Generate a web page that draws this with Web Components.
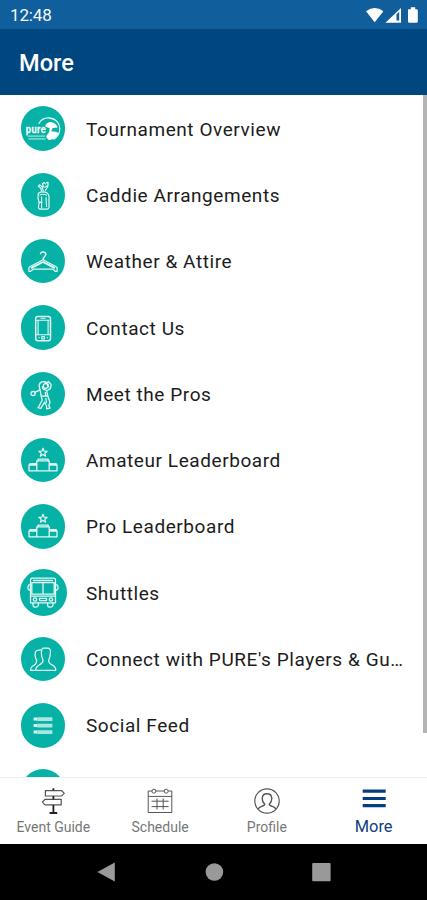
<!DOCTYPE html>
<html lang="en">
<head>
<meta charset="utf-8">
<meta name="viewport" content="width=device-width, initial-scale=1">
<title>More</title>
<style>
	html, body { margin: 0; height: 100%; overflow: hidden; }
	body { background: #fff; font-family: Roboto, "Noto Sans", sans-serif; }
</style>
</head>
<body>
<more-screen>
	<status-bar slot="top">12:48</status-bar>
	<title-bar slot="top">More</title-bar>

	<menu-item icon="pure">Tournament Overview</menu-item>
	<menu-item icon="bag">Caddie Arrangements</menu-item>
	<menu-item icon="hanger">Weather &amp; Attire</menu-item>
	<menu-item icon="phone">Contact Us</menu-item>
	<menu-item icon="golfer">Meet the Pros</menu-item>
	<menu-item icon="podium">Amateur Leaderboard</menu-item>
	<menu-item icon="podium">Pro Leaderboard</menu-item>
	<menu-item icon="bus" large>Shuttles</menu-item>
	<menu-item icon="people">Connect with PURE's Players &amp; Gu…</menu-item>
	<menu-item icon="feed">Social Feed</menu-item>
	<menu-item></menu-item>

	<tab-bar slot="bottom">
		<tab-item icon="signpost">Event Guide</tab-item>
		<tab-item icon="calendar">Schedule</tab-item>
		<tab-item icon="profile">Profile</tab-item>
		<tab-item icon="more" active>More</tab-item>
	</tab-bar>
	<system-nav slot="bottom"></system-nav>
</more-screen>

<script>
// Menu icons, drawn on a 44x44 box
const MENU_ICONS = {
	pure: `
		<text x="4.8" y="25.6" font-family="Roboto, sans-serif" font-size="11" font-weight="500" textLength="20.4" lengthAdjust="spacingAndGlyphs" fill="#fff" stroke="#fff" stroke-width=".3">pure</text>
		<path d="M17.8 16.8C19.8 12.8 24 10.6 28.5 11C34.5 11.5 38.8 16 38.8 21.5C38.8 26 36.5 30 32.5 32.4" stroke-width="1.3"/>
		<path d="M24.3 19.4C24.5 16.6 28 14.7 31 15.2C34 15.8 36 18 36.6 20.6L31.6 21.1L30.3 24.3C33 24.3 36 25 37.2 26C36 30 33 32.6 28 33C26 31.8 25.4 30.6 25.2 29L28.1 25.2L28.7 21.2Z" fill="#fff" stroke="none"/>
		<path d="M6.5 29.2H24M7.5 31.8H24.5" stroke-width="1.8" opacity=".5"/>`,
	bag: `
		<path d="M17.3 20.2Q22 17.6 26.6 20.2L28 23.2V34.4Q27.6 36.2 25.4 36.2H20Q17.6 36.2 17.4 34.2L18.1 29.5L17 25Z" stroke-width="1.2"/>
		<path d="M18.5 22Q22 20.4 26 22.3M25 24.2L25.6 34M18.2 29.4H21.4M20.6 23.4V35.4"/>
		<path d="M20.6 18.4L19.8 15L17.4 13.6L18.4 11.8L21 13.4L22.4 18.2M22.6 14.2L21.4 10.8L23 9.6L24.8 11.4M23.4 14.4L27 12.4V9.4L25 9.8M27 12.4L26.4 14.2L24.2 17.8" stroke-width="1.2"/>`,
	hanger: `
		<path d="M19.5 15.2C19.3 12.3 24.6 12 24.8 15.2C24.9 17.5 22.1 17.3 22.1 21.2" stroke-width="1.5"/>
		<path d="M22 20.8L8.8 27.8Q7.8 28.3 7.9 29.3V32.3H9.8L12 30.2H32L34.2 32.3H36.1V29.3Q36.2 28.3 35.2 27.8Z" stroke-width="1.2"/>
		<path d="M22 22.9L10 29.1M22 22.9L34 29.1" stroke-width="1.9"/>`,
	phone: `
		<rect x="14.7" y="10.6" width="14.8" height="24.2" rx="2.2" stroke-width="1.5"/>
		<path d="M15 14.2H29.2M15 28.8H29.2M17.1 14.2V28.8M27.1 14.2V28.8M19.6 12.3H24.4"/>
		<rect x="20.8" y="30.5" width="2.6" height="2.4"/>
		<path d="M17.3 31.7H18.7M25.5 31.7H26.9"/>`,
	golfer: `
		<g stroke-width="1.3">
			<circle cx="12.1" cy="21.6" r="2.1"/>
			<path d="M13.8 20.3L19 17.8L18.1 13.6Q18.4 10.6 21 9.8L24.3 9.6L25 11.2L27.4 9.4L30.2 12.6L29.4 16.6L25.7 18.7L22.2 17.2L21.2 14.2"/>
			<circle cx="24.6" cy="14" r="2.3"/>
			<path d="M26.6 11.2L28 15.7M19 17.8L20.3 24.5L21.2 28.2L18 34.3L17 35.7L19.8 36.4L23.7 30L25.6 34.2V36.8L29.1 36.2L27.8 33.6L29 30L27.4 25.8L26 20.3V18.4"/>
			<path d="M20.4 24.2L26.7 24M24.3 20.1L24.8 23.8M24.8 26L25.6 31"/>
		</g>`,
	podium: `
		<path d="M22 10.2L23.1 13.1L26.2 13.3L23.8 15.2L24.6 18.2L22 16.5L19.4 18.2L20.2 15.2L17.8 13.3L20.9 13.1Z" stroke-width="1.2"/>
		<path d="M15.8 32.8V22.8H17V21.2H27.2V22.8H28.2V32.8H15.8M15.8 27H9V25.6H15.8M9 27H8V32.8H15.8M28.2 25.6H35.2V27H36V32.8H28.2M28.2 27H35.2M17 22.8H27.2" stroke-width="1.3"/>`,
	bus: `
		<g stroke-width="1.3">
			<path d="M11.4 7.2H32.6Q34.5 7.2 34.5 9.3V31.9H9.5V9.3Q9.5 7.2 11.4 7.2Z"/>
			<path d="M12 9.5H32M10.8 11.6H33.2V23.2H10.8ZM22 11.6V23.2M9.5 25.2H34.5"/>
			<path d="M9.3 13.8H8Q6.9 14 7 17.8Q7.1 19 8.2 19H9.3M34.7 13.8H36Q37.1 14 37 17.8Q36.9 19 35.8 19H34.7"/>
			<circle cx="14" cy="28.5" r="1.7"/><circle cx="30" cy="28.5" r="1.7"/>
			<path d="M18.5 27.4H25.5V29.6H18.5ZM12 32V34.2Q12.2 36.2 14.8 36.2Q17.2 36 17.4 34.2V32M26.6 32V34.2Q26.8 36.2 29.2 36.2Q31.8 36 32 34.2V32"/>
		</g>`,
	people: `
		<g stroke-width="1.25">
			<path d="M20.8 12.7Q21 11.2 22.4 11.2H26.6Q29.6 11.4 29.5 14.7L28.9 19.8Q27.7 22 27.7 24.6Q28.3 26.6 31.4 28.1Q34.8 29.8 34.8 33.3H14.6Q14.8 30.1 17.8 28.2Q21.6 26.4 22 24.2Q21.8 21.8 20.8 19.8Q19.8 16.2 20.8 12.7Z"/>
			<path d="M20.1 12.9Q15.3 12.8 14.4 15.1Q13.8 17.6 14.4 20.4Q16 23 15.5 25.3Q14.7 27.8 12 28.8Q9.6 30.2 9.5 33.3H14.6"/>
		</g>`,
	feed: `
		<path d="M12.6 16.1H16.2M12.6 22.6H16.2M12.6 29.1H16.2" stroke-width="3" stroke-linecap="butt"/>
		<path d="M16.2 16.1H31.4M16.2 22.6H31.4M16.2 29.1H31.4" stroke-width="3.8" stroke-linecap="butt" opacity=".75"/>`
};

// Tab icons, drawn on a 28x28 box
const TAB_ICONS = {
	signpost: `
		<path d="M6.4 3.6H22.6L25.2 6.3L22.6 9H6.4ZM22.2 12.4H6L3.4 15.1L6 17.8H22.2Z" stroke-width="1.2"/>
		<path d="M14.4 1.2V3.4M14.4 9V12.2M14.4 18V25.6M10.6 26H18.2" stroke="#222" stroke-width="1.8"/>`,
	calendar: `
		<path d="M6.2 4H2.2V25.5H25.8V4H22.4M9.6 4H18.8M2.2 9.4H25.8"/>
		<circle cx="7.9" cy="4.2" r="2"/><circle cx="20.2" cy="4.2" r="2"/>
		<path d="M5.6 14.2H22.6M5.6 19.6H22.6M11 11.4V22.5M17.2 11.4V22.5"/>`,
	profile: `
		<circle cx="14" cy="14" r="12.2" stroke-width="1.2"/>
		<path d="M5 22.2Q6 20.3 8.7 19.3Q11.8 18.3 11.7 17.2Q9.1 14.5 9.2 11.4Q9.4 6.7 14 6.7Q18.6 6.7 18.8 11.4Q18.9 14.5 16.3 17.2Q16.2 18.3 19.3 19.3Q22 20.3 23 22.2" stroke-width="1.4"/>`,
	more: `<path d="M2.7 4.2H25.7M2.7 11.5H25.7M2.7 18.6H25.7" stroke-width="3.2"/>`
};

class MoreScreen extends HTMLElement {
	constructor() {
		super();
		this.attachShadow({ mode: 'open' });
		this.shadowRoot.innerHTML = `
			<style>
				:host {
					display: flex;
					flex-direction: column;
					width: 427px;
					height: 900px;
					overflow: hidden;
				}
				main {
					flex: 1;
					min-height: 0;
					box-sizing: border-box;
					padding-top: .5px;
					position: relative;
					overflow: hidden;
				}
				/* Scroll thumb, over the list */
				.thumb {
					position: absolute;
					top: 0;
					right: 0;
					width: 4px;
					height: 638px;
					background: #b4b4b5;
				}
			</style>
			<slot name="top"></slot>
			<main>
				<slot></slot>
				<div class="thumb"></div>
			</main>
			<slot name="bottom"></slot>
		`;
	}
}

class StatusBar extends HTMLElement {
	constructor() {
		super();
		this.attachShadow({ mode: 'open' });
		this.shadowRoot.innerHTML = `
			<style>
				:host {
					display: flex;
					flex: none;
					align-items: center;
					justify-content: space-between;
					box-sizing: border-box;
					height: 29px;
					padding: 1px 8px 0 10px;
					background: #105e9b;
					color: #f4f8fb;
					font-size: 17px;
					letter-spacing: -.15px;
				}
				svg { display: block; margin-top: -1px; }
			</style>
			<slot></slot>
			<svg width="54" height="18" viewBox="0 0 54 18" fill="#fff">
				<path d="M1 5.3Q9.7-1.5 18.4 5.3L9.7 16.3Z"/>
				<path d="M20.4 16.8L36 2V16.8Z"/>
				<path d="M31.5 8.3L34.2 5.7V14.6H31.5Z" fill="#105e9b"/>
				<path d="M43.2 3.2H45.8V1.2H50.2V3.2H51.4Q52.8 3.2 52.8 4.6V15.4Q52.8 16.8 51.4 16.8H44.4Q43 16.8 43 15.4V4.6Q43 3.4 43.2 3.2Z"/>
			</svg>
		`;
	}
}

class TitleBar extends HTMLElement {
	constructor() {
		super();
		this.attachShadow({ mode: 'open' });
		this.shadowRoot.innerHTML = `
			<style>
				:host {
					display: flex;
					flex: none;
					align-items: center;
					box-sizing: border-box;
					height: 66px;
					padding: 2px 19px 0;
					background: #01477f;
					color: #fff;
					font-size: 23.6px;
					font-weight: 500;
				}
			</style>
			<slot></slot>
		`;
	}
}

class MenuItem extends HTMLElement {
	constructor() {
		super();
		this.attachShadow({ mode: 'open' });
		const icon = MENU_ICONS[this.getAttribute('icon')] || '';
		this.shadowRoot.innerHTML = `
			<style>
				:host {
					display: grid;
					grid-template-columns: 46.4px 1fr;
					column-gap: 19.6px;
					align-items: center;
					height: 66.3px;
					padding-left: 20px;
					color: #1c1c1c;
					font-size: 19px;
					letter-spacing: .57px;
					white-space: nowrap;
				}
				.disc {
					justify-self: center;
					display: grid;
					place-items: center;
					width: 44.4px;
					height: 44.4px;
					border-radius: 50%;
					background: #06b2a5;
				}
				:host([large]) .disc { width: 47px; height: 47px; }
				svg {
					width: 44px;
					height: 44px;
					fill: none;
					stroke: #e2f8f4;
					stroke-width: 1.1;
					stroke-linejoin: round;
				}
				span { padding-top: 1px; }
			</style>
			<div class="disc"><svg viewBox="0 0 44 44">${icon}</svg></div>
			<span><slot></slot></span>
		`;
	}
}

class TabBar extends HTMLElement {
	constructor() {
		super();
		this.attachShadow({ mode: 'open' });
		this.shadowRoot.innerHTML = `
			<style>
				:host {
					display: grid;
					flex: none;
					grid-template-columns: repeat(4, 1fr);
					box-sizing: border-box;
					height: 67px;
					border-top: 1px solid #efefef;
					background: #fff;
				}
			</style>
			<slot></slot>
		`;
	}
}

class TabItem extends HTMLElement {
	constructor() {
		super();
		this.attachShadow({ mode: 'open' });
		this.shadowRoot.innerHTML = `
			<style>
				:host {
					display: flex;
					flex-direction: column;
					align-items: center;
					padding-top: 9px;
					color: #777;
					font-size: 14px;
				}
				:host([active]) {
					color: #0e3f7f;
					font-size: 16.4px;
				}
				svg {
					width: 28px;
					height: 28px;
					fill: none;
					stroke: #555;
				}
				:host([active]) svg { stroke: #053d80; }
				span { line-height: 22px; margin-top: 1px; }
			</style>
			<svg viewBox="0 0 28 28">${TAB_ICONS[this.getAttribute('icon')]}</svg>
			<span><slot></slot></span>
		`;
	}
}

class SystemNav extends HTMLElement {
	constructor() {
		super();
		this.attachShadow({ mode: 'open' });
		this.shadowRoot.innerHTML = `
			<style>
				:host {
					display: flex;
					flex: none;
					align-items: center;
					justify-content: center;
					gap: 87px;
					height: 56px;
					background: #000;
				}
				svg { display: block; width: 20px; height: 20px; fill: #999; }
			</style>
			<svg viewBox="0 0 20 20"><path d="M.4 10L17.8.5V19.5Z"/></svg>
			<svg viewBox="0 0 20 20"><circle cx="10.4" cy="10" r="8.8"/></svg>
			<svg viewBox="0 0 20 20"><rect x="1.2" y="1" width="18.4" height="18.2" rx="1"/></svg>
		`;
	}
}

customElements.define('more-screen', MoreScreen);
customElements.define('status-bar', StatusBar);
customElements.define('title-bar', TitleBar);
customElements.define('menu-item', MenuItem);
customElements.define('tab-bar', TabBar);
customElements.define('tab-item', TabItem);
customElements.define('system-nav', SystemNav);
</script>
</body>
</html>
